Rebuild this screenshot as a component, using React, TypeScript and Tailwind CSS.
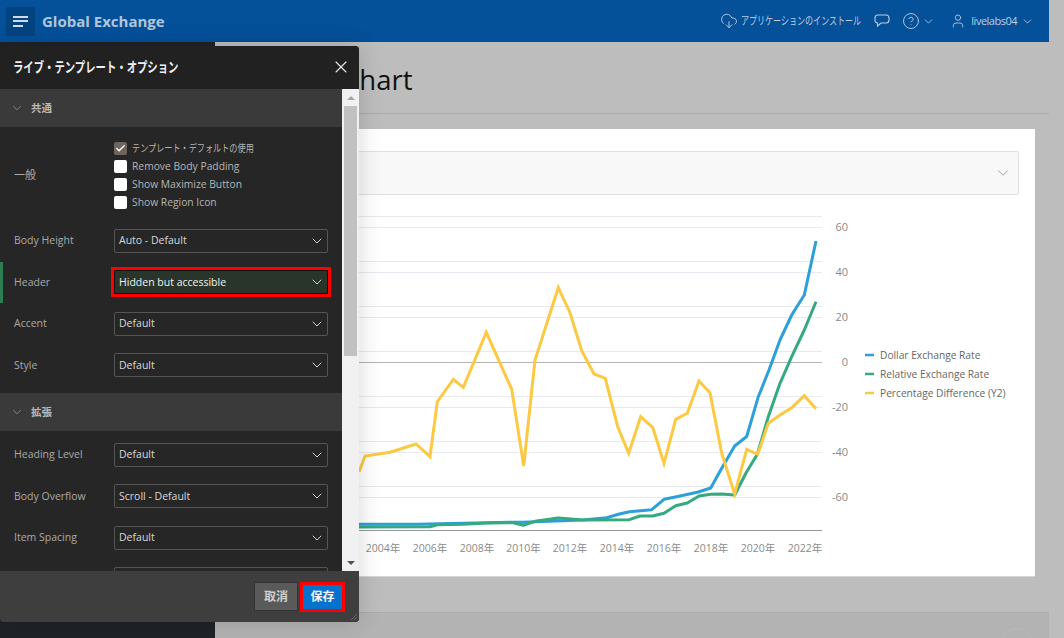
import React from "react";
import { ChevronDown, CloudDownload, CircleHelp, User, X, Check } from "lucide-react";

const F = "[font-family:'Open_Sans','Noto_Sans_CJK_JP',sans-serif]";

const yellow = "359,472 365,456 390,452.3 416,444 430,456.7 437.3,401.7 453.3,379.3 463.3,387.3 486.3,332.3 511.7,389.3 523.7,466 535,360 558.3,287.7 570,312.7 581.7,350.7 594,374 605.3,378.3 617.7,426.7 628.7,453.3 640.7,416.7 652.7,427.3 664,463.3 675.7,419.3 687.3,413.3 699,381 710,392.7 721.7,453.3 734.7,494 746.7,449.3 757.7,454.3 768.3,423.3 780,415 791.7,407.7 804.3,395.7 816,408.7";
const blue = "359,524.3 416.7,524.3 510,522.3 523.3,522.3 535,521.7 583,520 606.7,517.7 618.3,514.3 629.3,511.7 651.7,509.7 664,499.3 676.7,496.7 698.3,492 710.7,488 721.7,468.3 734.7,446 746.7,436.5 758.3,396.7 769,370 780,340 791.7,315 804.3,295 816,241";
const green = "359,527 430,526.7 437.3,524.7 463,524.3 486.7,523 513.3,522.7 523.3,525.3 535,521.3 558.3,518 583.3,520 629.3,519.7 640,516 652.7,516 664,513.3 675.7,505.7 687.3,503 699,496 710.7,494.3 721.7,494 734.7,495 746,473 757.3,454.3 768.3,416.7 780,383.3 791.7,356.7 804.3,330 816,301.7";
const grid = [216, 261, 272, 306, 317, 351, 396, 407, 441, 452, 486, 497, 227];
const yLabels: [string, number][] = [["60", 227], ["40", 271.5], ["20", 316.5], ["0", 361.5], ["-20", 406.5], ["-40", 451.5], ["-60", 496.5]];
const xLabels: [string, number][] = [["2004年", 383], ["2006年", 430], ["2008年", 477], ["2010年", 523.5], ["2012年", 570], ["2014年", 617], ["2016年", 664], ["2018年", 711], ["2020年", 758], ["2022年", 805]];
const legend: [string, string, number][] = [["#2d9fd9", "Dollar Exchange Rate", 355], ["#35a97f", "Relative Exchange Rate", 374], ["#fcc943", "Percentage Difference (Y2)", 393]];

function Chart() {
  return (
    <svg viewBox="231 195 804 381" className="block w-[804px] h-[381px]" fontFamily="'Open Sans','Noto Sans CJK JP',sans-serif">
      {grid.map((y) => <line key={y} x1="340" x2="822" y1={y + 0.5} y2={y + 0.5} stroke="#e9eaef" />)}
      <line x1="340" x2="822" y1="362.5" y2="362.5" stroke="#b4b4b4" />
      <line x1="340" x2="822" y1="530.5" y2="530.5" stroke="#999" />
      <polyline points={blue} fill="none" stroke="#2d9fd9" strokeWidth="3" strokeLinejoin="round" />
      <polyline points={green} fill="none" stroke="#35a97f" strokeWidth="3" strokeLinejoin="round" />
      <polyline points={yellow} fill="none" stroke="#fcc943" strokeWidth="3" strokeLinejoin="miter" />
      {yLabels.map(([t, y]) => <text key={t} x="848" y={y + 4} textAnchor="end" fontSize="11" fill="#8a8a8a">{t}</text>)}
      {xLabels.map(([t, x]) => <text key={t} x={x} y="552" textAnchor="middle" fontSize="10.5" fill="#8a8a8a">{t}</text>)}
      {legend.map(([c, t, y]) => (
        <g key={t}>
          <line x1="865" x2="874" y1={y} y2={y} stroke={c} strokeWidth="2.5" />
          <text x="880" y={y + 4} fontSize="10.2" fill="#666">{t}</text>
        </g>
      ))}
    </svg>
  );
}

function Select({ value, active }: { value: string; active?: boolean }) {
  return (
    <div className={`w-[214px] h-6 border flex items-center justify-between pl-1 pr-[2px] text-[10.5px] ${active ? "bg-[#29352a] border-[#111] text-[#f2f2f2] outline-[3px] outline-[#ff0000] font-medium" : "rounded-[2px] bg-[#262626] border-[#555] text-[#d8d8d8]"}`}>
      <span className="pt-px">{value}</span>
      <ChevronDown size={16} strokeWidth={1.4} className="text-[#e0e0e0]" />
    </div>
  );
}

function Row({ label, value, active }: { label: string; value: string; active?: boolean }) {
  return (
    <div className={`h-[41.5px] flex items-center shrink-0 ${active ? "border-l-[3px] border-[#2e7d52] pl-[11px]" : "pl-[14px]"}`}>
      <div className="w-[100px] pt-px text-[10.5px] text-[#a9a9a9]">{label}</div>
      <Select value={value} active={active} />
    </div>
  );
}

function Section({ title }: { title: string }) {
  return (
    <div className="h-[38px] shrink-0 bg-[#3a3a3a] flex items-center pl-[10px] gap-[7px] text-[10.5px] font-semibold text-[#b9b9b9]">
      <ChevronDown size={14} strokeWidth={1.5} className="text-[#8f8f8f]" />
      <span className="pt-[2px]">{title}</span>
    </div>
  );
}

function Box({ checked, label }: { checked?: boolean; label: React.ReactNode }) {
  return (
    <div className="h-[18px] flex items-center gap-[5px] text-[10.3px] text-[#b5b5b5]">
      <div className={`w-[13px] h-[13px] rounded-[2px] flex items-center justify-center ${checked ? "bg-[#6d655e]" : "bg-white"}`}>
        {checked && <Check size={11} strokeWidth={3} className="text-white" />}
      </div>
      <span>{label}</span>
    </div>
  );
}

function Narrow({ w, k, children }: { w: string; k: string; children: React.ReactNode }) {
  return <span className={`inline-block whitespace-nowrap origin-left ${w} ${k}`}>{children}</span>;
}

function Dialog() {
  return (
    <div className="absolute left-0 top-[46px] w-[359px] h-[576px] rounded-[4px] overflow-hidden bg-[#262626] flex flex-col shadow-[0_0_24px_rgba(0,0,0,0.16)]">
      <div className="h-[43px] shrink-0 bg-[#212121] flex items-center justify-between pl-[13px] pr-[8px] pb-[2px] text-[#efefef]">
        <span className="text-[14px] font-bold"><Narrow w="w-[164px]" k="scale-x-[0.74]">ライブ・テンプレート・オプション</Narrow></span>
        <X size={20} strokeWidth={1.4} className="text-[#e5e5e5]" />
      </div>
      <div className="flex-1 min-h-0 flex">
        <div className="w-[342px] overflow-hidden flex flex-col">
          <Section title="共通" />
          <div className="h-[93px] shrink-0 pt-[12px] pb-[8px] pl-[14px] flex items-center">
            <div className="w-[100px] text-[11px] text-[#a9a9a9]">一般</div>
            <div className="flex flex-col">
              <Box checked label={<Narrow w="w-[122px]" k="scale-x-[0.79]">テンプレート・デフォルトの使用</Narrow>} />
              <Box label="Remove Body Padding" />
              <Box label="Show Maximize Button" />
              <Box label="Show Region Icon" />
            </div>
          </div>
          <Row label="Body Height" value="Auto - Default" />
          <Row label="Header" value="Hidden but accessible" active />
          <Row label="Accent" value="Default" />
          <Row label="Style" value="Default" />
          <div className="h-[7px] shrink-0" />
          <Section title="拡張" />
          <div className="h-[3px] shrink-0" />
          <Row label="Heading Level" value="Default" />
          <Row label="Body Overflow" value="Scroll - Default" />
          <Row label="Item Spacing" value="Default" />
          <Row label="" value="" />
        </div>
        <div className="w-[17px] bg-[#f1f1f1] flex flex-col items-center">
          <div className="h-[17px] flex items-center justify-center">
            <div className="w-0 h-0 border-x-[4px] border-x-transparent border-b-[4px] border-b-[#a5a5a5]" />
          </div>
          <div className="w-[13px] h-[250px] bg-[#c1c1c1]" />
          <div className="flex-1" />
          <div className="h-[17px] flex items-center justify-center">
            <div className="w-0 h-0 border-x-[4px] border-x-transparent border-t-[4px] border-t-[#505050]" />
          </div>
        </div>
      </div>
      <div className="h-[51px] shrink-0 bg-[#3e3e3e] flex items-start justify-end gap-[5px] pt-[11px] pr-[17px] relative text-[12px] font-bold">
        <div className="w-[44px] h-[29px] bg-[#5a5a5a] border border-[#333] flex items-center justify-center text-[#cfcfcf] rounded-[1px]">取消</div>
        <div className="w-[39px] h-[24px] mt-[3px] bg-[#0572ce] outline-[3px] outline-[#ff0000] flex items-center justify-center text-[#f4f4f4]">保存</div>
        <svg className="absolute right-[1px] bottom-[1px]" width="8" height="8" viewBox="0 0 8 8" stroke="#666"><path d="M7 1 1 7M7 4 4 7" /></svg>
      </div>
    </div>
  );
}

export default function App() {
  return (
    <div className={`relative w-[1064px] h-[638px] overflow-hidden bg-[#bdbdbd] ${F}`}>
      <div className="w-[1049px] h-[42px] bg-[#045099] flex items-center pl-[6px] pr-[15px] text-[#bccee2]">
        <div className="w-[29px] h-[29px] rounded-[2px] bg-[#03437f] flex flex-col justify-center gap-[2.5px] pl-[7px]">
          <div className="w-[15px] h-[2px] bg-[#cfdbe8]" />
          <div className="w-[15px] h-[2px] bg-[#cfdbe8]" />
          <div className="w-[10px] h-[2px] bg-[#cfdbe8]" />
        </div>
        <div className="ml-[7px] text-[15px] font-bold text-[#b2c6db]">Global Exchange</div>
        <div className="flex-1" />
        <CloudDownload size={18} strokeWidth={1.2} />
        <div className="ml-[3px] w-[119px] text-[11px]"><Narrow w="w-[119px]" k="scale-x-[0.73]">アプリケーションのインストール</Narrow></div>
        <svg className="ml-[14px]" width="16" height="14" viewBox="0 0 16 14" fill="none" stroke="currentColor" strokeWidth="1.1"><path d="M4 1h8a3 3 0 0 1 3 3v2a3 3 0 0 1-3 3H7l-3.5 3V9A2.6 2.6 0 0 1 1 6V4a3 3 0 0 1 3-3Z" /></svg>
        <CircleHelp className="ml-[12px]" size={18} strokeWidth={1.2} />
        <ChevronDown className="ml-[2px]" size={13} strokeWidth={1.5} />
        <User className="ml-[15px]" size={16} strokeWidth={1.3} />
        <span className="ml-[5px] text-[11px] tracking-[-0.5px]">livelabs04</span>
        <ChevronDown className="ml-[4px]" size={13} strokeWidth={1.5} />
      </div>
      <div className="flex h-[596px]">
        <div className="w-[215px] bg-[#1f2327]" />
        <div className="w-[834px] flex flex-col">
          <div className="h-[72px] shrink-0 border-b border-[#aaaaaa] flex items-center pl-[127px] pt-[5px] text-[27.5px] font-medium text-[#111]">Chart</div>
          <div className="ml-[16px] mt-[15px] w-[804px] h-[448px] shrink-0 bg-white border-b border-[#d6d6d6] flex flex-col">
            <div className="mt-[22px] ml-[16px] w-[772px] h-[44px] shrink-0 bg-[#f8f8f8] border border-[#e0e0e0] rounded-[2px] flex items-center justify-end pr-[6px]">
              <ChevronDown size={18} strokeWidth={1} className="text-[#808080]" />
            </div>
            <Chart />
          </div>
          <div className="mt-[35px] flex-1 bg-[#b3b3b3] border-t border-[#aaaaaa] relative">
            <div className="absolute left-[785px] top-[15px] w-[33px] h-[33px] rounded-full border border-[#b9b9b9]" />
          </div>
        </div>
      </div>
      <Dialog />
    </div>
  );
}
